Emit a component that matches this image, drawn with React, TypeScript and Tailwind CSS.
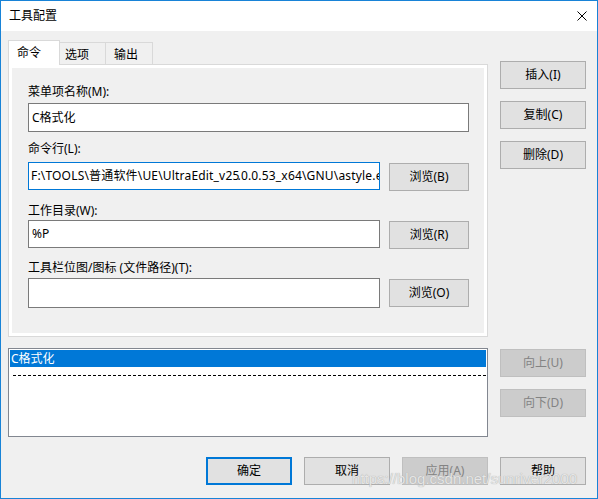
import React from "react";

// Windows 10 style "工具配置" dialog (UltraEdit tool configuration).

const btn =
  "h-[28px] w-[86px] border border-[#adadad] bg-[#e1e1e1] flex items-center justify-center text-black";
const btnOff =
  "h-[28px] w-[86px] border border-[#bfbfbf] bg-[#cccccc] flex items-center justify-center text-[#838383]";
const field = "border border-[#7a7a7a] bg-white flex items-center px-[3px] overflow-hidden whitespace-nowrap";

function Browse({ label }: { label: string }) {
  return (
    <div className="h-[28px] w-[80px] border border-[#adadad] bg-[#e1e1e1] flex items-center justify-center">
      {label}
    </div>
  );
}

export default function App() {
  return (
    <div className="relative w-[598px] h-[499px] overflow-hidden border border-[#1883d7] bg-[#f0f0f0] text-[12px] leading-[16px] text-black font-['Noto_Sans','Noto_Sans_CJK_SC',sans-serif] flex flex-col">
      {/* Title bar */}
      <div className="h-[30px] shrink-0 bg-white flex items-center justify-between pl-[8px] pr-[10px]">
        <span>工具配置</span>
        <svg width="10" height="10" viewBox="0 0 10 10" className="block">
          <path d="M0.5 0.5L9.5 9.5M9.5 0.5L0.5 9.5" stroke="#000" strokeWidth="1" />
        </svg>
      </div>

      <div className="flex-1 pl-[7px] pt-[9px]">
        {/* Tabs + side buttons */}
        <div className="flex gap-[12px]">
          <div className="w-[480px] flex flex-col">
            <div className="h-[24px] flex items-end">
              <div className="relative z-10 -mb-px h-[25px] w-[52px] border border-b-0 border-[#d9d9d9] bg-white pl-[8px] pt-[4px]">
                命令
              </div>
              <div className="h-[22px] w-[46px] border-t border-r border-[#d9d9d9] bg-[#f0f0f0] pl-[5px] pt-[4px]">
                选项
              </div>
              <div className="h-[22px] w-[47px] border-t border-r border-[#d9d9d9] bg-[#f0f0f0] pl-[8px] pt-[4px]">
                输出
              </div>
            </div>
            <div className="h-[273px] border border-[#d9d9d9] bg-white p-[3px]">
              <div className="h-full bg-[#f0f0f0] pl-[16px] pt-[16px] flex flex-col">
                <div>菜单项名称(M):</div>
                <div className={`${field} mt-[3px] h-[29px] w-[441px]`}>C格式化</div>

                <div className="mt-[9px]">命令行(L):</div>
                <div className="mt-[5px] flex items-start gap-[9px]">
                  <div className="h-[28px] w-[352px] border border-[#0078d7] bg-white flex items-center px-[2px] overflow-hidden whitespace-nowrap tracking-[0.18px]">
                    <span>F:\TOOLS\普通软件\UE\UltraEdit_v25</span>
                    <span className="inline-block w-px h-[15px] bg-black -mx-px" />
                    <span>.0.0.53_x64\GNU\astyle.exe</span>
                  </div>
                  <div className="mt-[1px]">
                    <Browse label="浏览(B)" />
                  </div>
                </div>

                <div className="mt-[12px]">工作目录(W):</div>
                <div className="mt-[1px] flex items-start gap-[9px]">
                  <div className={`${field} h-[28px] w-[352px]`}>%P</div>
                  <div className="mt-[1px]">
                    <Browse label="浏览(R)" />
                  </div>
                </div>

                <div className="mt-[11px]">工具栏位图/图标 (文件路径)(T):</div>
                <div className="mt-[2px] flex items-start gap-[9px]">
                  <div className={`${field} h-[30px] w-[352px]`} />
                  <div className="mt-[1px]">
                    <Browse label="浏览(O)" />
                  </div>
                </div>
              </div>
            </div>
          </div>
          <div className="flex flex-col gap-[12px] pt-[21px]">
            <div className={btn}>插入(I)</div>
            <div className={btn}>复制(C)</div>
            <div className={btn}>删除(D)</div>
          </div>
        </div>

        {/* Tool list */}
        <div className="mt-[11px] flex gap-[12px]">
          <div className="h-[89px] w-[480px] border border-[#828790] bg-white p-px">
            <div className="h-[17px] bg-[#0078d7] text-white pl-[1px] flex items-center">C格式化</div>
            <div className="mt-[8px] ml-[3px] h-px bg-[repeating-linear-gradient(to_right,#000_0_3px,transparent_3px_5px)]" />
          </div>
          <div className="flex flex-col gap-[12px] pt-[1px]">
            <div className={btnOff}>向上(U)</div>
            <div className={btnOff}>向下(D)</div>
          </div>
        </div>

        {/* Dialog buttons */}
        <div className="mt-[20px] pl-[198px] flex gap-[12px]">
          <div className="h-[28px] w-[86px] border-2 border-[#0078d7] bg-[#e1e1e1] flex items-center justify-center">
            确定
          </div>
          <div className={btn}>取消</div>
          <div className={btnOff}>应用(A)</div>
          <div className={btn}>帮助</div>
        </div>
      </div>

      {/* Watermark */}
      <div className="pointer-events-none absolute left-[351px] top-[468px] text-[15px] leading-[20px] text-[#e6e6e6] font-['Liberation_Sans',sans-serif] [text-shadow:0_0_1px_#9a9a9a]">
        https://blog.csdn.net/sunriver2000
      </div>
    </div>
  );
}
